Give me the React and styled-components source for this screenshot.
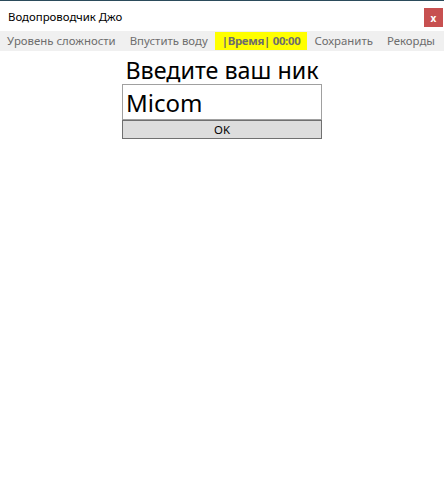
import React, {useState} from 'react'
import styled, {createGlobalStyle} from 'styled-components'

const GlobalStyle = createGlobalStyle`
  html, body {
    margin: 0;
    padding: 0;
    background: #ffffff;
    font-family: "Noto Sans", "Open Sans", sans-serif;
  }
`

const Window = styled.div`
  width: 444px;
  height: 492px;
  box-sizing: border-box;
  border-top: 1px solid #2b4b5b;
  background: #ffffff;
  display: flex;
  flex-direction: column;
`

const TitleBar = styled.div`
  height: 30px;
  display: flex;
  align-items: center;
  justify-content: space-between;
  padding: 0 1px 0 8px;
`

const Title = styled.div`
  font-size: 11.4px;
  color: #000;
`

const CloseButton = styled.div`
  width: 19px;
  height: 19px;
  background: #c75050;
  color: #fff;
  font-size: 10px;
  font-weight: bold;
  display: flex;
  align-items: center;
  justify-content: center;
  margin-top: 3px;
`

const MenuBar = styled.div`
  height: 20px;
  background: #f0f0f0;
  display: flex;
  align-items: center;
`

const MenuItem = styled.div`
  font-size: 11.4px;
  color: #6d6d6d;
  background: ${(p) => (p.$highlight ? '#ffff00' : 'transparent')};
  font-weight: ${(p) => (p.$highlight ? 'bold' : 'normal')};
  letter-spacing: ${(p) => (p.$highlight ? '-0.3px' : 'normal')};
  padding: 0 7px;
  height: 18px;
  line-height: 18px;
  white-space: nowrap;
`

const Content = styled.div`
  display: flex;
  flex-direction: column;
  align-items: center;
  padding-top: 5px;
`

const Heading = styled.div`
  font-size: 23.3px;
  line-height: 28px;
  color: #000;
`

const NickInput = styled.input`
  width: 200px;
  height: 36px;
  box-sizing: border-box;
  border: 1px solid #a0a0a0;
  font-family: "Noto Sans", "Open Sans", sans-serif;
  font-size: 24px;
  padding: 0 3px;
  outline: none;
  color: #000;
`

const OkButton = styled.button`
  width: 200px;
  height: 19px;
  box-sizing: border-box;
  border: 1px solid #707070;
  background: #dddddd;
  font-family: "Noto Sans", "Open Sans", sans-serif;
  font-size: 11.4px;
  color: #000;
  padding: 0;
  line-height: 17px;
`

const App = () => {
  const [nick, setNick] = useState('Micom')

  return (
    <>
      <GlobalStyle />
      <Window>
        <TitleBar>
          <Title>Водопроводчик Джо</Title>
          <CloseButton>x</CloseButton>
        </TitleBar>
        <MenuBar>
          <MenuItem>Уровень сложности</MenuItem>
          <MenuItem>Впустить воду</MenuItem>
          <MenuItem $highlight>|Время| 00:00</MenuItem>
          <MenuItem>Сохранить</MenuItem>
          <MenuItem>Рекорды</MenuItem>
        </MenuBar>
        <Content>
          <Heading>Введите ваш ник</Heading>
          <NickInput value={nick} onChange={(e) => setNick(e.target.value)} />
          <OkButton>OK</OkButton>
        </Content>
      </Window>
    </>
  )
}

export default App
